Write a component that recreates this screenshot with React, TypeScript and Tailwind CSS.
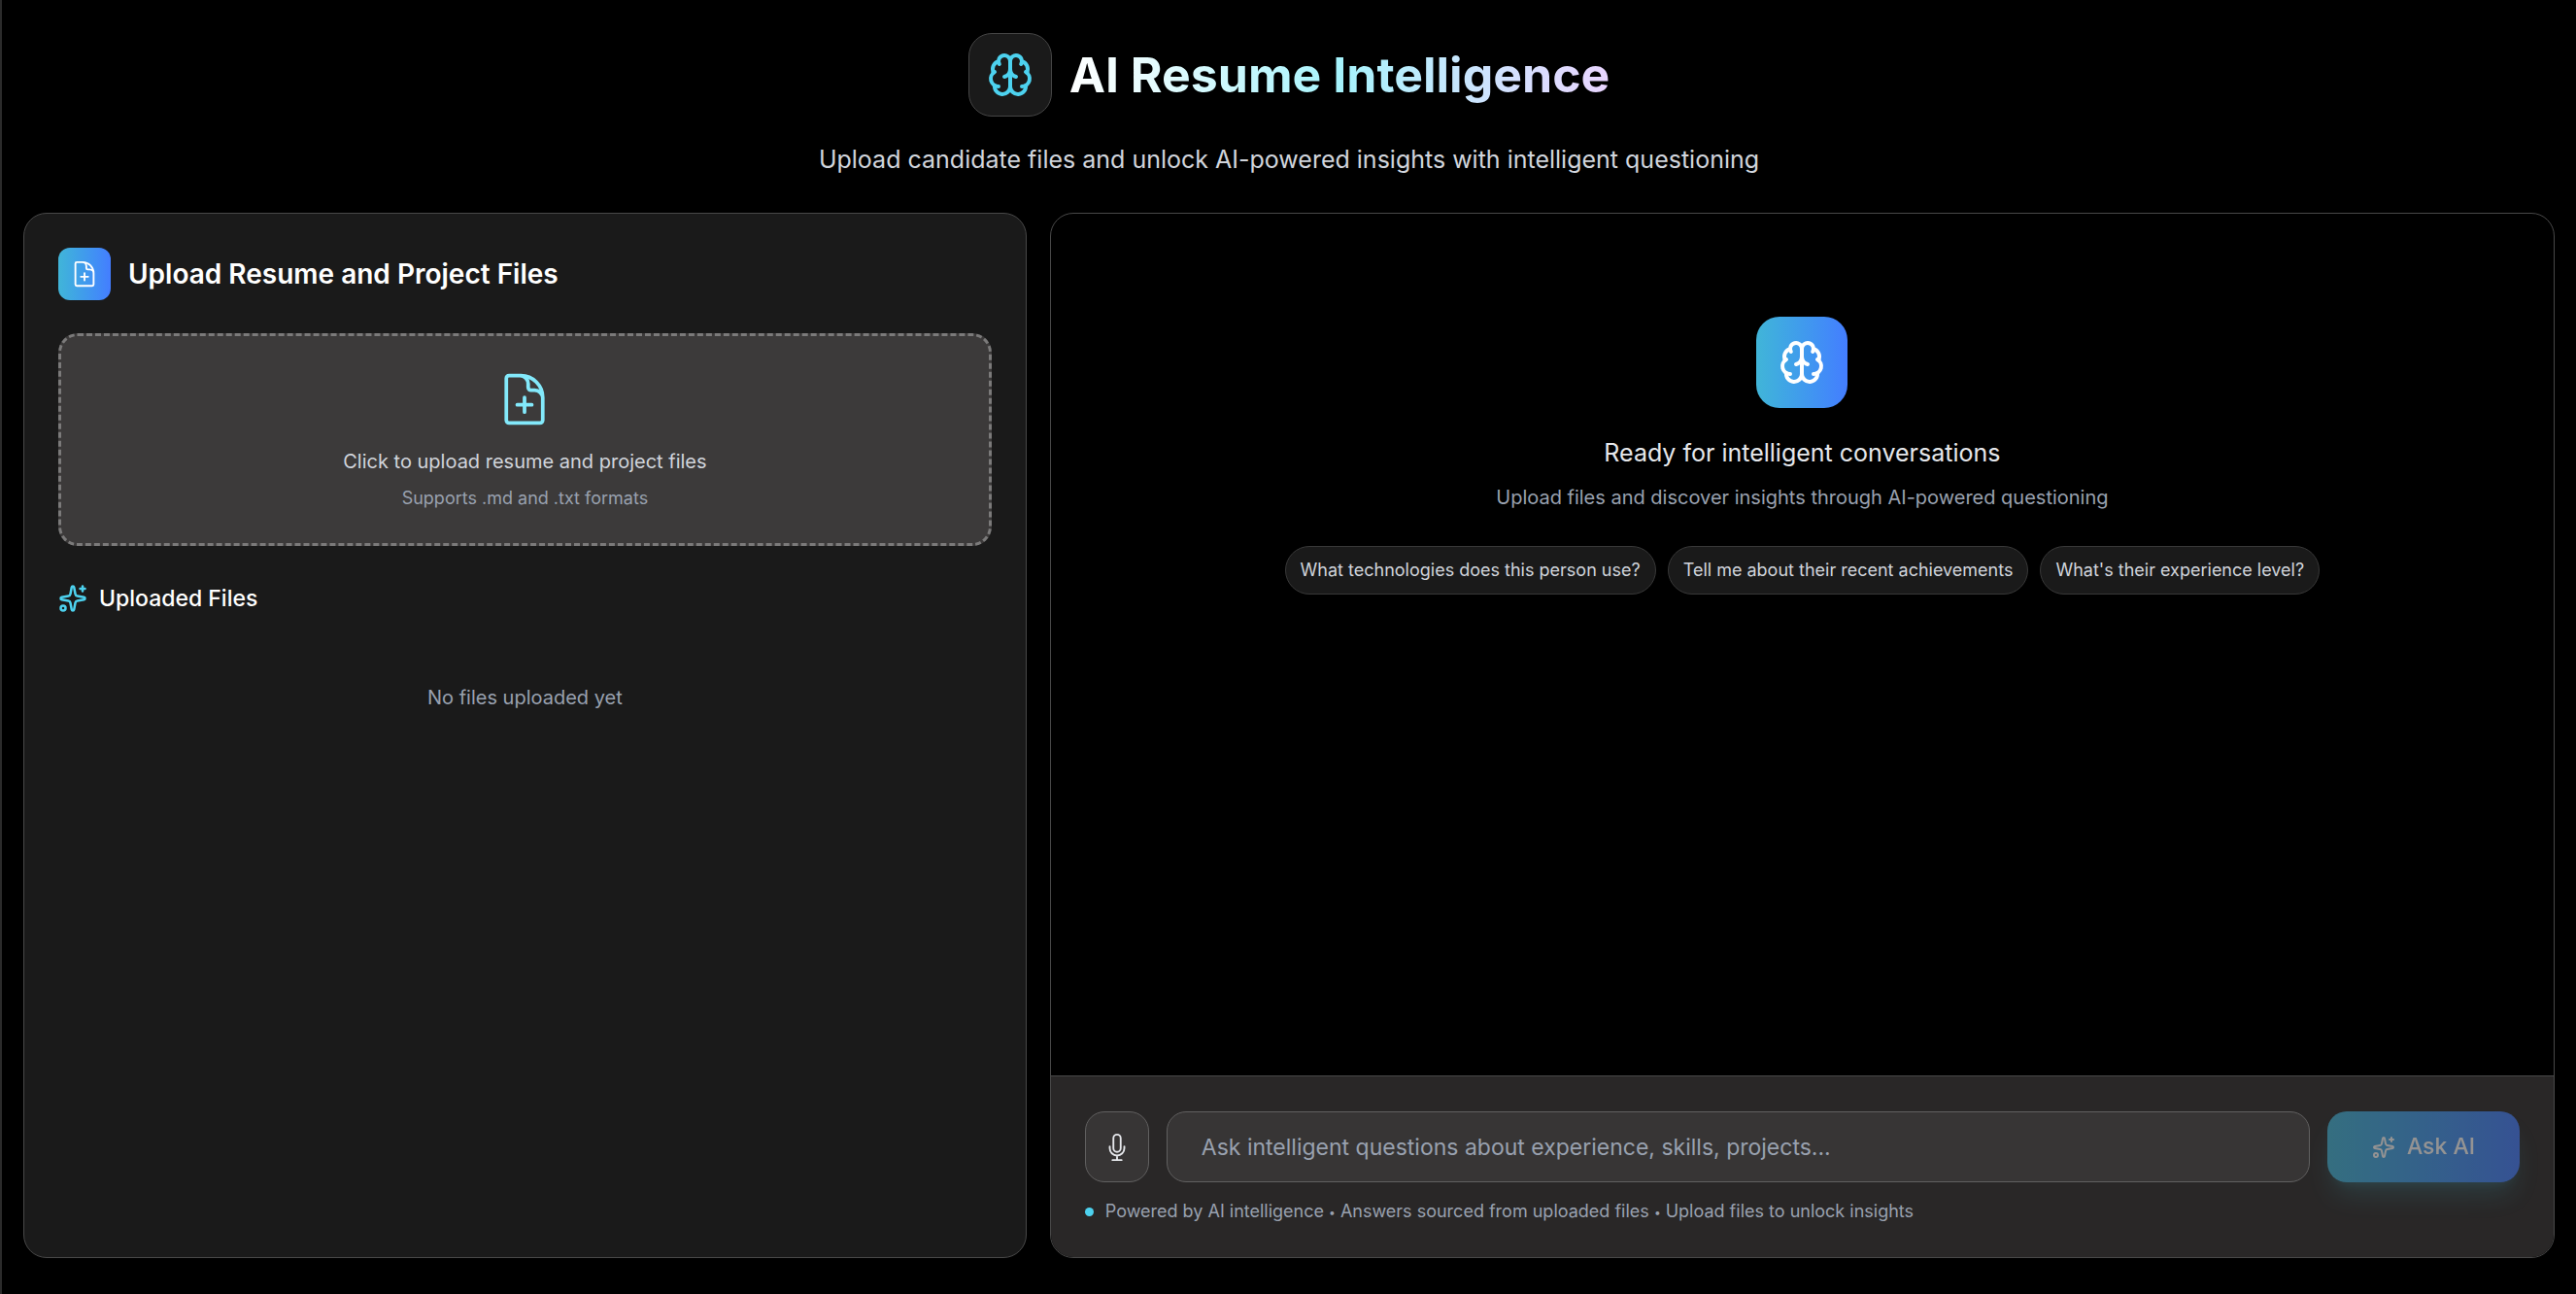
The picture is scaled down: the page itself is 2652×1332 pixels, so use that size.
import { Brain, Sparkles } from "lucide-react";
import { HiOutlineDocumentPlus, HiOutlineMicrophone } from "react-icons/hi2";

const suggestions = [
  "What technologies does this person use?",
  "Tell me about their recent achievements",
  "What's their experience level?",
];

function Header() {
  return (
    <header className="flex flex-col items-center pt-[34px] pb-[37px]">
      <div className="flex items-center gap-[18px]">
        <div className="flex size-[86px] items-center justify-center rounded-3xl border border-[#454545] bg-[#1a1a1a]">
          <Brain className="size-12 text-[#4dd2ef]" />
        </div>
        <h1 className="bg-linear-to-r from-white via-[#a5f3fc] to-[#e9d5ff] bg-clip-text text-[50px] leading-[64px] font-bold text-transparent">
          AI Resume Intelligence
        </h1>
      </div>
      <p className="mt-[26px] text-[25px] leading-9 text-[#d1d5dc]">
        Upload candidate files and unlock AI-powered insights with intelligent questioning
      </p>
    </header>
  );
}

function UploadPanel() {
  return (
    <section className="flex flex-col rounded-3xl border border-[#484848] bg-[#1a1a1a] p-[35px]">
      <div className="flex items-center gap-[18px]">
        <div className="flex size-[54px] items-center justify-center rounded-xl bg-linear-to-r from-[#41b5d8] to-[#447dff]">
          <HiOutlineDocumentPlus className="size-[30px] text-white" />
        </div>
        <h2 className="text-[28px] leading-10 font-semibold text-white">Upload Resume and Project Files</h2>
      </div>
      <button
        type="button"
        className="mt-[34px] flex w-full flex-col items-center rounded-[20px] border-3 border-dashed border-[#7b7a7a] bg-[#3c3a3a] px-8 pt-[35px] pb-[34px]"
      >
        <HiOutlineDocumentPlus className="size-[60px] text-[#83e9fb]" />
        <span className="mt-5 text-xl leading-7 text-[#d1d5dc]">Click to upload resume and project files</span>
        <span className="mt-3 text-lg leading-6 text-[#99a1af]">Supports .md and .txt formats</span>
      </button>
      <div className="mt-[38px] flex items-center gap-3">
        <Sparkles className="size-[30px] text-[#4dd2ef]" />
        <h3 className="text-[23px] leading-8 font-medium text-white">Uploaded Files</h3>
      </div>
      <p className="mt-[72px] text-center text-xl leading-7 text-[#99a1af]">No files uploaded yet</p>
    </section>
  );
}

function Conversation() {
  return (
    <div className="flex flex-1 flex-col items-center pt-[106px]">
      <div className="flex size-[94px] items-center justify-center rounded-3xl bg-linear-to-r from-[#41b5d8] to-[#447dff]">
        <Brain className="size-12 text-white" />
      </div>
      <h2 className="mt-7 text-[25px] leading-9 text-[#e5e7eb]">Ready for intelligent conversations</h2>
      <p className="mt-3 text-xl leading-8 text-[#99a1af]">
        Upload files and discover insights through AI-powered questioning
      </p>
      <div className="mt-[34px] flex flex-wrap justify-center gap-3">
        {suggestions.map((text) => (
          <button
            key={text}
            type="button"
            className="rounded-full border border-[#383838] bg-[#1a1a1a] px-[15px] py-3 text-lg leading-6 text-[#d1d5dc]"
          >
            {text}
          </button>
        ))}
      </div>
    </div>
  );
}

function Composer() {
  return (
    <form className="border-t border-[#484848] bg-[#292727] px-[35px] pt-[36px] pb-[33px]">
      <div className="flex gap-[18px]">
        <button
          type="button"
          aria-label="Record a question"
          className="flex w-[66px] items-center justify-center rounded-[20px] border border-[#616060] bg-[#373535] text-[#e5e7eb]"
        >
          <HiOutlineMicrophone className="size-[30px]" />
        </button>
        <input
          type="text"
          aria-label="Question"
          placeholder="Ask intelligent questions about experience, skills, projects..."
          className="h-[73px] min-w-0 flex-1 rounded-[20px] border border-[#616060] bg-[#373535] px-[35px] text-[23px] text-white placeholder:text-[#99a1af]"
        />
        <button
          type="submit"
          disabled
          className="flex w-[198px] items-center justify-center gap-3 rounded-[20px] bg-linear-to-r from-[#41b5d8] to-[#447dff] text-[23px] font-medium text-white opacity-50 shadow-[0_18px_28px_-6px_rgba(77,210,239,0.25),0_8px_12px_-8px_rgba(77,210,239,0.25)]"
        >
          <Sparkles className="size-6" />
          Ask AI
        </button>
      </div>
      <p className="mt-4 flex items-center gap-3 text-lg leading-7 text-[#99a1af]">
        <span className="size-[9px] rounded-full bg-[#4dd2ef]" />
        <span>
          Powered by AI intelligence <span className="align-middle text-xs leading-none">•</span> Answers sourced from
          uploaded files <span className="align-middle text-xs leading-none">•</span> Upload files to unlock insights
        </span>
      </p>
    </form>
  );
}

export default function App() {
  return (
    <div className="flex min-h-screen flex-col border-l-2 border-[#2b2b2b] bg-black pr-[22px] pb-[37px] pl-[22px] font-['Inter',sans-serif]">
      <Header />
      <main className="grid flex-1 grid-cols-[2fr_3fr] gap-6">
        <UploadPanel />
        <section className="flex flex-col overflow-hidden rounded-3xl border border-[#484848] bg-black">
          <Conversation />
          <Composer />
        </section>
      </main>
    </div>
  );
}
